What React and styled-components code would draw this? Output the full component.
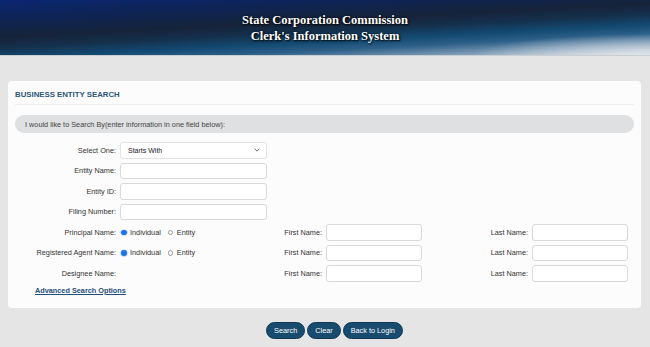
import React from "react";
import styled, { createGlobalStyle } from "styled-components";

const Global = createGlobalStyle`
  html, body { margin: 0; padding: 0; }
  body {
    background: #e4e5e4;
    font-family: "Liberation Sans", Arial, sans-serif;
    color: #333;
  }
`;

const Header = styled.header`
  height: 56px;
  border-bottom: 1px solid #c9ced3;
  background:
    radial-gradient(ellipse 170px 24px at 640px 58px, rgba(226,231,236,0.85), rgba(226,231,236,0) 100%),
    linear-gradient(177deg, #0a2670 0%, #0f2452 24%, #16233a 42%, #15304c 54%, #134a72 66%, #2e6088 76%, #7f9cb6 88%, #d6dce2 100%);
  display: flex;
  flex-direction: column;
  align-items: center;
  justify-content: center;
  padding-top: 1px;
  box-sizing: border-box;
`;

const HeaderLine = styled.div`
  font-family: "Liberation Serif", "Times New Roman", serif;
  font-weight: bold;
  font-size: 12.5px;
  line-height: 16px;
  color: #fff;
  text-shadow: 1px 1px 2px #000, 0 0 3px rgba(0,0,0,0.6);
  white-space: nowrap;
`;

const Main = styled.main`
  padding: 25px 9px 0 8px;
`;

const Card = styled.section`
  background: #fcfcfc;
  border-radius: 4px;
  padding: 7px 7px 11px 7px;
`;

const Title = styled.h2`
  margin: 0;
  font-size: 7.8px;
  font-weight: bold;
  color: #2b5579;
  line-height: 13px;
  padding-bottom: 3px;
  border-bottom: 1px solid #eeeeee;
`;

const InfoBar = styled.div`
  margin-top: 10px;
  height: 18px;
  border-radius: 9px;
  background: #dfe0e1;
  display: flex;
  align-items: center;
  padding-left: 10px;
  font-size: 7.3px;
  color: #444;
`;

const FormGrid = styled.div`
  margin-top: 9px;
  display: grid;
  grid-template-columns: 101px 147px 51px 96px 102px 96px;
  grid-auto-rows: 16.5px;
  column-gap: 4px;
  row-gap: 4px;
  align-items: center;
`;

const Label = styled.label`
  font-size: 7.3px;
  color: #333;
  text-align: right;
  white-space: nowrap;
  grid-column: ${(p) => p.$col || "auto"};
`;

const TextInput = styled.input`
  box-sizing: border-box;
  height: 16.5px;
  width: 100%;
  margin: 0;
  border: 1px solid #d9d9d9;
  border-radius: 3px;
  background: #fff;
  font-size: 7.3px;
  padding: 0 6px;
  grid-column: ${(p) => p.$col || "auto"};
`;

const SelectBox = styled.div`
  box-sizing: border-box;
  height: 16.5px;
  border: 1px solid #e2e2e2;
  border-radius: 3px;
  background: #fff;
  display: flex;
  align-items: center;
  justify-content: space-between;
  padding: 0 6px 0 7px;
  font-size: 7px;
  color: #222;
  grid-column: 2 / span 1;
`;

const RadioGroup = styled.div`
  display: flex;
  align-items: center;
  gap: 7px;
  padding-left: 1px;
  grid-column: 2 / span 1;
`;

const RadioOption = styled.label`
  display: flex;
  align-items: center;
  gap: 3.5px;
  font-size: 7.3px;
  color: #333;
`;

const RadioDot = styled.input`
  appearance: none;
  margin: 0;
  width: 5.5px;
  height: 5.5px;
  border-radius: 50%;
  box-sizing: border-box;
  border: 1px solid ${(p) => (p.checked ? "#1a73e8" : "#9a9a9a")};
  background: ${(p) => (p.checked ? "#1a73e8" : "#fff")};
  box-shadow: ${(p) => (p.checked ? "0 0 0 0.6px #a9c8f3" : "none")};
`;

const LinkRow = styled.div`
  margin-top: 3px;
  padding-left: 20px;
  font-size: 7.3px;
  line-height: 12px;
`;

const AdvLink = styled.a`
  font-size: 7.3px;
  font-weight: bold;
  color: #1f4f7a;
  text-decoration: underline;
`;

const ButtonRow = styled.div`
  display: flex;
  justify-content: center;
  gap: 2px;
  margin-top: 14px;
  padding-left: 20px;
`;

const Button = styled.button`
  height: 17px;
  padding: 0 7px;
  border-radius: 9px;
  border: 1px solid #0f3a57;
  background: #184b6e;
  color: #fff;
  font-family: "Liberation Sans", Arial, sans-serif;
  font-size: 7.3px;
  line-height: 15px;
  cursor: pointer;
`;

const Chevron = () => (
  <svg width="6" height="4" viewBox="0 0 6 4">
    <path d="M0.6 0.8 L3 3.1 L5.4 0.8" fill="none" stroke="#555" strokeWidth="0.9" />
  </svg>
);

const Radios = ({ name }) => (
  <RadioGroup>
    <RadioOption>
      <RadioDot type="radio" name={name} checked readOnly />
      Individual
    </RadioOption>
    <RadioOption>
      <RadioDot type="radio" name={name} checked={false} readOnly />
      Entity
    </RadioOption>
  </RadioGroup>
);

const NameFields = () => (
  <>
    <Label $col="3">First Name:</Label>
    <TextInput $col="4" />
    <Label $col="5">Last Name:</Label>
    <TextInput $col="6" />
  </>
);

export default function App() {
  return (
    <>
      <Global />
      <Header>
        <HeaderLine>State Corporation Commission</HeaderLine>
        <HeaderLine>Clerk's Information System</HeaderLine>
      </Header>
      <Main>
        <Card>
          <Title>BUSINESS ENTITY SEARCH</Title>
          <InfoBar>I would like to Search By(enter information in one field below):</InfoBar>
          <FormGrid>
            <Label $col="1">Select One:</Label>
            <SelectBox>
              <span>Starts With</span>
              <Chevron />
            </SelectBox>
            <Label $col="1">Entity Name:</Label>
            <TextInput $col="2" />
            <Label $col="1">Entity ID:</Label>
            <TextInput $col="2" />
            <Label $col="1">Filing Number:</Label>
            <TextInput $col="2" />

            <Label $col="1">Principal Name:</Label>
            <Radios name="principal" />
            <NameFields />

            <Label $col="1">Registered Agent Name:</Label>
            <Radios name="agent" />
            <NameFields />

            <Label $col="1">Designee Name:</Label>
            <NameFields />
          </FormGrid>
          <LinkRow>
            <AdvLink href="#">Advanced Search Options</AdvLink>
          </LinkRow>
        </Card>
        <ButtonRow>
          <Button>Search</Button>
          <Button>Clear</Button>
          <Button>Back to Login</Button>
        </ButtonRow>
      </Main>
    </>
  );
}
